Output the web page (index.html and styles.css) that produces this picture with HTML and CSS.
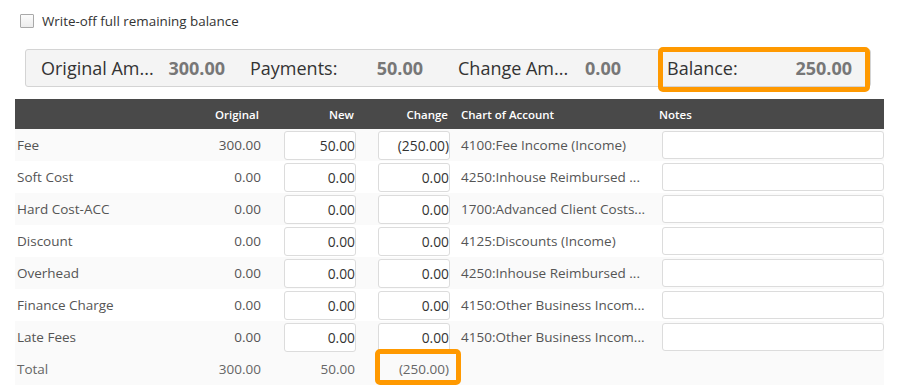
FILE: index.html
```html
<!DOCTYPE html>
<html>
<head>
<meta charset="utf-8">
<link rel="stylesheet" href="styles.css">
</head>
<body>
<div class="page">
  <label class="writeoff"><span class="cb"></span><span class="cb-text">Write-off full remaining balance</span></label>

  <div class="summary">
    <div class="sum-item s1"><span class="sum-label">Original Am...</span><span class="sum-val">300.00</span></div>
    <div class="sum-item s2"><span class="sum-label">Payments:</span><span class="sum-val">50.00</span></div>
    <div class="sum-item s3"><span class="sum-label">Change Am...</span><span class="sum-val">0.00</span></div>
    <div class="sum-item s4 mark-balance"><span class="sum-label">Balance:</span><span class="sum-val">250.00</span></div>
  </div>

  <div class="table">
    <div class="row head">
      <div class="c c-label"></div>
      <div class="c c-orig">Original</div>
      <div class="c c-new">New</div>
      <div class="c c-chg">Change</div>
      <div class="c c-acct">Chart of Account</div>
      <div class="c c-notes">Notes</div>
    </div>
    <div class="body">
      <div class="row">
        <div class="c c-label">Fee</div><div class="c c-orig">300.00</div>
        <div class="c c-new"><input class="num" value="50.00"></div>
        <div class="c c-chg"><input class="num" value="(250.00)"></div>
        <div class="c c-acct">4100:Fee Income (Income)</div>
        <div class="c c-notes"><input class="note"></div>
      </div>
      <div class="row">
        <div class="c c-label">Soft Cost</div><div class="c c-orig">0.00</div>
        <div class="c c-new"><input class="num" value="0.00"></div>
        <div class="c c-chg"><input class="num" value="0.00"></div>
        <div class="c c-acct">4250:Inhouse Reimbursed ...</div>
        <div class="c c-notes"><input class="note"></div>
      </div>
      <div class="row">
        <div class="c c-label">Hard Cost-ACC</div><div class="c c-orig">0.00</div>
        <div class="c c-new"><input class="num" value="0.00"></div>
        <div class="c c-chg"><input class="num" value="0.00"></div>
        <div class="c c-acct">1700:Advanced Client Costs...</div>
        <div class="c c-notes"><input class="note"></div>
      </div>
      <div class="row">
        <div class="c c-label">Discount</div><div class="c c-orig">0.00</div>
        <div class="c c-new"><input class="num" value="0.00"></div>
        <div class="c c-chg"><input class="num" value="0.00"></div>
        <div class="c c-acct">4125:Discounts (Income)</div>
        <div class="c c-notes"><input class="note"></div>
      </div>
      <div class="row">
        <div class="c c-label">Overhead</div><div class="c c-orig">0.00</div>
        <div class="c c-new"><input class="num" value="0.00"></div>
        <div class="c c-chg"><input class="num" value="0.00"></div>
        <div class="c c-acct">4250:Inhouse Reimbursed ...</div>
        <div class="c c-notes"><input class="note"></div>
      </div>
      <div class="row">
        <div class="c c-label">Finance Charge</div><div class="c c-orig">0.00</div>
        <div class="c c-new"><input class="num" value="0.00"></div>
        <div class="c c-chg"><input class="num" value="0.00"></div>
        <div class="c c-acct">4150:Other Business Incom...</div>
        <div class="c c-notes"><input class="note"></div>
      </div>
      <div class="row">
        <div class="c c-label">Late Fees</div><div class="c c-orig">0.00</div>
        <div class="c c-new"><input class="num" value="0.00"></div>
        <div class="c c-chg"><input class="num" value="0.00"></div>
        <div class="c c-acct">4150:Other Business Incom...</div>
        <div class="c c-notes"><input class="note"></div>
      </div>
    </div>
    <div class="row foot">
      <div class="c c-label">Total</div>
      <div class="c c-orig">300.00</div>
      <div class="c c-new"><span class="tot">50.00</span></div>
      <div class="c c-chg mark-total"><span class="tot">(250.00)</span></div>
      <div class="c c-acct"></div>
      <div class="c c-notes"></div>
    </div>
  </div>
</div>
</body>
</html>
```

FILE: styles.css
```css
* { box-sizing: border-box; }
html, body { margin: 0; padding: 0; background: #fff; }
body {
  font-family: "Open Sans", "Noto Sans", "DejaVu Sans", sans-serif;
  color: #333;
  width: 898px;
  height: 392px;
  overflow: hidden;
}
.page { padding: 13px 0 0 0; }

.writeoff {
  display: flex;
  align-items: center;
  gap: 8px;
  margin-left: 20px;
  height: 16px;
  font-size: 13.4px;
  color: #333;
}
.cb {
  width: 14px;
  height: 14px;
  border: 1px solid #a9a9a9;
  background: linear-gradient(#fcfcfc, #ececec);
  border-radius: 1px;
}

.summary {
  margin: 20px 0 0 25px;
  width: 846px;
  height: 38px;
  border: 1px solid #d4d4d4;
  border-radius: 3px;
  background: #f4f4f4;
  display: grid;
  grid-template-columns: 209px 208px 199px 1fr;
  padding-left: 15px;
  font-size: 18px;
}
.sum-item {
  display: flex;
  align-items: center;
  justify-content: space-between;
}
.sum-label { color: #333; white-space: nowrap; }
.sum-val { font-weight: 700; color: #777; }
.s1 { padding-right: 25px; }
.s2 { padding-right: 35px; }
.s3 { padding-right: 36px; }
.s4 { padding: 0 18px 0 10px; }

.mark-balance, .mark-total { position: relative; }
.mark-balance::after {
  content: "";
  position: absolute;
  left: 1px;
  right: 0;
  top: -3px;
  bottom: -6px;
  border: 5px solid #ff9900;
  border-radius: 5px;
  pointer-events: none;
}
.mark-total::after {
  content: "";
  position: absolute;
  left: 17px;
  right: -9px;
  top: -4px;
  bottom: 0;
  border: 5px solid #ff9900;
  border-radius: 5px;
  pointer-events: none;
}

.table {
  margin: 12px 0 0 15px;
  width: 869px;
  font-size: 13.5px;
  color: #555;
}
.row {
  display: grid;
  grid-template-columns: 175px 72px 96px 94px 205px 227px;
  height: 32px;
  align-items: center;
}
.body .row:nth-child(odd) { background: #fafafa; }
.row.head {
  height: 30px;
  background: #494949;
  color: #fff;
  font-weight: 600;
  font-size: 11.5px;
}
.row.foot { background: #fafafa; height: 32px; color: #666; }

.c { white-space: nowrap; overflow: visible; }
.c-label { padding-left: 2px; }
.c-orig { text-align: right; padding-right: 1px; }
.c-new, .c-chg { display: flex; justify-content: flex-end; padding-right: 2px; }
.head .c-orig { padding-right: 3px; }
.head .c-new, .head .c-chg { padding-right: 4px; }
.c-acct { padding-left: 9px; overflow: hidden; }
.c-notes { padding-left: 5px; }
.head .c-notes { padding-left: 2px; }
.foot .c-new, .foot .c-chg { padding-right: 3px; }
.foot .c-chg { height: 100%; align-items: center; }

input {
  font-family: inherit;
  margin: 0;
  outline: none;
}
input.num {
  width: 72px;
  height: 29px;
  border: 1px solid #dcdcdc;
  border-radius: 3px;
  background: #fff;
  text-align: right;
  padding: 0 0 0 2px;
  font-size: 13.8px;
  color: #333;
}
input.note {
  width: 222px;
  height: 28px;
  border: 1px solid #dcdcdc;
  border-radius: 3px;
  background: #fff;
}
```
